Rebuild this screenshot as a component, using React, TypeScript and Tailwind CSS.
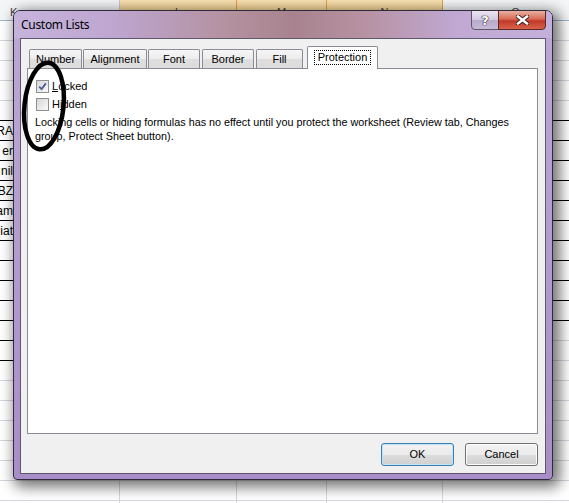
import React from 'react';

const ui = "font-['Liberation_Sans',Arial,sans-serif]";

const leftText: Record<number, string> = { 5: 'RA', 6: 'er', 7: 'nil', 8: 'BZ', 9: 'am', 10: 'iat' };

const tabs = [
  { label: 'Number', cls: 'w-[53px]' },
  { label: 'Alignment', cls: 'w-[64px] ml-[1px]' },
  { label: 'Font', cls: 'w-[52px] ml-[1px]' },
  { label: 'Border', cls: 'w-[52px] ml-[2px]' },
  { label: 'Fill', cls: 'w-[47px] ml-[2px]' },
];

const Checkbox: React.FC<{ checked?: boolean }> = ({ checked }) => (
  <span className="w-[13px] h-[13px] shrink-0 border border-[#8e8f8f] bg-[linear-gradient(135deg,#d6d6d6,#fafafa)] flex items-center justify-center">
    {checked && (
      <svg width="9" height="9" viewBox="0 0 9 9">
        <path d="M1.2 4.6 L3.6 7.1 L7.9 1.4" fill="none" stroke="#4b5f99" strokeWidth="1.9" />
      </svg>
    )}
  </span>
);

const Sheet: React.FC = () => {
  const rows = Array.from({ length: 25 }, (_, i) => i);
  return (
    <div className={`flex flex-col ${ui}`}>
      <div className="flex h-[21px] border-b border-[#9eb6ce] text-[11px] text-[#3d3d3d]">
        <div className="w-[120px] shrink-0 pl-[10px] pt-[4px] bg-[#f4f5f7] border-r border-[#c5c9cf]">K</div>
        <div className="w-[117px] shrink-0 text-center pt-[4px] bg-[linear-gradient(180deg,#f9e2b5,#f1c673)] border-r border-[#e3a03f]">L</div>
        <div className="w-[90px] shrink-0 text-center pt-[4px] bg-[linear-gradient(180deg,#f9e2b5,#f1c673)] border-r border-[#e3a03f]">M</div>
        <div className="w-[116px] shrink-0 text-center pt-[4px] bg-[linear-gradient(180deg,#f9e2b5,#f1c673)] border-r border-[#e3a03f]">N</div>
        <div className="w-[146px] shrink-0 text-center pt-[4px] bg-[#f4f5f7] border-r border-[#c5c9cf]">O</div>
      </div>
      {rows.map((i) => {
        const leftBlack = i >= 4 && i <= 16;
        const rightBlack = i >= 4 && i <= 14;
        return (
          <div key={i} className="flex h-[20px]">
            <div
              className={`w-[120px] shrink-0 border-b border-r border-r-[#d4d8de] flex items-end ${
                leftBlack ? 'border-b-black' : 'border-b-[#d4d8de]'
              }`}
            >
              <span className="w-[13px] whitespace-nowrap flex justify-end text-[12px] leading-[14px] pb-[2px] text-black">
                {leftText[i] ?? ''}
              </span>
            </div>
            <div className="w-[117px] shrink-0 border-b border-r border-[#d4d8de]" />
            <div className="w-[90px] shrink-0 border-b border-r border-[#d4d8de]" />
            <div className="w-[116px] shrink-0 border-b border-r border-[#d4d8de]" />
            <div className={`w-[146px] shrink-0 border-b ${rightBlack ? 'border-black' : 'border-[#d4d8de]'}`} />
          </div>
        );
      })}
    </div>
  );
};

const App: React.FC = () => {
  return (
    <div className="relative w-[569px] h-[503px] overflow-hidden bg-white">
      <Sheet />

      {/* dialog window */}
      <div className="absolute left-[13px] top-[10px] w-[540px] h-[470px] flex flex-col px-[6px] pb-[5px] rounded-t-[7px] rounded-b-[4px] border border-[#2f2b3a] bg-[linear-gradient(180deg,#bda8d8,#a98dc8)] shadow-[4px_4px_14px_3px_rgba(0,0,0,0.55)] overflow-hidden">
        <div className="-mx-[6px] px-[6px] h-[27px] flex items-start justify-between bg-[linear-gradient(90deg,#c6b3dc_0%,#bea6d1_18%,#b4919f_40%,#a8838f_52%,#b6909f_64%,#c0a8d2_82%,#c4b0dc_100%)]">
          <span className="self-center pl-[1px] text-[12px] tracking-[-0.3px] text-black font-['Noto_Sans',sans-serif] leading-[16px]">
            Custom Lists
          </span>
          <div className="flex -mt-[1px]">
            <div className="w-[28px] h-[20px] flex items-center justify-center border border-[#5c5868] rounded-bl-[4px] bg-[linear-gradient(180deg,#ebe4f2_0%,#d4c8e0_48%,#b9a9ca_52%,#c7b9d8_100%)]">
              <span className="font-['DejaVu_Sans',sans-serif] font-bold text-[13px] leading-[13px] text-white [text-shadow:0_0_1px_#222,0_0_1px_#222,0_0_1px_#222]">
                ?
              </span>
            </div>
            <div className="w-[48px] h-[20px] -ml-[1px] flex items-center justify-center border border-[#5a2a24] rounded-br-[4px] bg-[linear-gradient(180deg,#eab0a2_0%,#d66a55_45%,#c2382a_55%,#d9624b_100%)]">
              <svg width="13" height="10" viewBox="0 0 13 10">
                <path d="M2 1.5 L11 8.5 M11 1.5 L2 8.5" stroke="#3a2622" strokeWidth="4.4" strokeLinecap="square" />
                <path d="M2 1.5 L11 8.5 M11 1.5 L2 8.5" stroke="#ffffff" strokeWidth="2.4" strokeLinecap="square" />
              </svg>
            </div>
          </div>
        </div>

        <div className={`flex-1 flex flex-col border border-[#5e586c] bg-[#f0f0f0] pl-[6px] pr-[7px] ${ui} text-[11px] text-black`}>
          {/* tab strip */}
          <div className="mt-[7px] h-[22px] flex items-end pl-[2px]">
            {tabs.map((t) => (
              <div
                key={t.label}
                className={`${t.cls} h-[19px] shrink-0 flex items-center justify-center border border-b-0 border-[#898c95] rounded-t-[2px] bg-[linear-gradient(180deg,#f6f6f6_0%,#ececec_50%,#dedede_52%,#dcdcdc_100%)]`}
              >
                {t.label}
              </div>
            ))}
            <div className="w-[71px] ml-[4px] h-[23px] -mb-[1px] shrink-0 relative z-10 flex items-center justify-center border border-b-0 border-[#898c95] rounded-t-[2px] bg-white pb-[1px]">
              <span className="outline-1 outline-dotted outline-black px-[3px] leading-[13px]">Protection</span>
            </div>
          </div>

          {/* tab panel */}
          <div className="h-[366px] border border-[#898c95] bg-white pl-[7px] pt-[11px] flex flex-col">
            <label className="ml-[1px] flex items-center gap-[3px] h-[13px] leading-[13px]">
              <Checkbox checked />
              <span>
                <span className="underline">L</span>ocked
              </span>
            </label>
            <label className="ml-[1px] mt-[5px] flex items-center gap-[3px] h-[13px] leading-[13px]">
              <Checkbox />
              <span>
                H<span className="underline">i</span>dden
              </span>
            </label>
            <p className="mt-[4px] leading-[14px] whitespace-nowrap text-[10.8px]">
              Locking cells or hiding formulas has no effect until you protect the worksheet (Review tab, Changes
              <br />
              group, Protect Sheet button).
            </p>
          </div>

          {/* buttons */}
          <div className="mt-[9px] flex justify-end gap-[11px]">
            <button className="w-[73px] h-[23px] rounded-[3px] border border-[#3c7fb1] shadow-[inset_0_0_0_1px_#bfe6fb] bg-[linear-gradient(180deg,#f2f2f2_0%,#ebebeb_50%,#dddddd_52%,#cfcfcf_100%)] text-[11px]">
              OK
            </button>
            <button className="w-[73px] h-[23px] rounded-[3px] border border-[#707070] shadow-[inset_0_0_0_1px_#fcfcfc] bg-[linear-gradient(180deg,#f2f2f2_0%,#ebebeb_50%,#dddddd_52%,#cfcfcf_100%)] text-[11px]">
              Cancel
            </button>
          </div>
        </div>
      </div>

      {/* hand-drawn ellipse */}
      <svg className="absolute left-[18px] top-[56px]" width="52" height="100" viewBox="0 0 52 100">
        <ellipse cx="26" cy="50" rx="19.5" ry="43.5" transform="rotate(6 26 50)" fill="none" stroke="#000" strokeWidth="4.5" />
      </svg>
    </div>
  );
};

export default App;
